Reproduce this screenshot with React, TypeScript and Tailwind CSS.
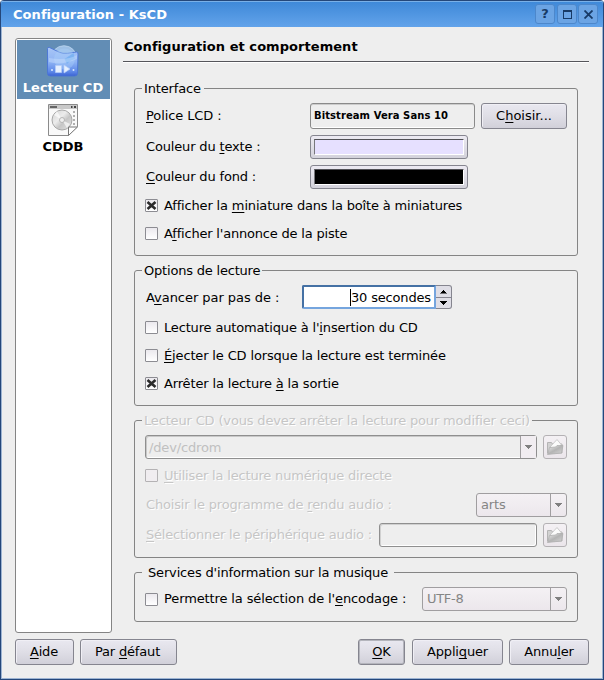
import React from "react";

type Kids = { children?: React.ReactNode };

function U({ children }: Kids) {
  return <span className="underline decoration-1 underline-offset-2 [text-decoration-skip-ink:none]">{children}</span>;
}

function Label({ children, className = "" }: Kids & { className?: string }) {
  return <span className={"whitespace-nowrap leading-4 " + className}>{children}</span>;
}

function Panel({ title, className, legend, children }: Kids & { title: string; className: string; legend: string }) {
  return (
    <section className={"relative flex flex-col rounded-[3px] border border-[#848484] px-[10px] " + className}>
      <h2 className={"absolute -top-[8px] bg-[#eeeeee] whitespace-nowrap leading-4 " + legend}>{title}</h2>
      {children}
    </section>
  );
}

function Check({ on, off, children, className = "" }: Kids & { on?: boolean; off?: boolean; className?: string }) {
  return (
    <div className={"flex h-[13px] items-center gap-[6px] " + className}>
      <span
        className={
          "flex size-[13px] shrink-0 items-center justify-center rounded-[1px] border " +
          (off ? "border-[#b4b2b4] bg-[#f0edf0]" : "border-[#8c8c92] bg-linear-to-b from-[#ebe9ee] to-white")
        }
      >
        {on && (
          <svg width="11" height="11" viewBox="0 0 11 11" stroke="#2b2b2b" strokeWidth="2.6">
            <path d="M1.5 2 9.5 9M9.5 2 1.5 9" />
          </svg>
        )}
      </span>
      <Label className={off ? "text-[#c6c6c6] [text-shadow:1px_1px_0_#fff]" : ""}>{children}</Label>
    </div>
  );
}

function Button({ children, className }: Kids & { className: string }) {
  return (
    <button
      className={
        "flex h-[26px] shrink-0 items-center justify-center rounded-[3px] border bg-linear-to-b from-[#e9e8f0] via-[#dfdee6] to-[#d1d0d9] leading-4 whitespace-nowrap " +
        className
      }
    >
      <span>{children}</span>
    </button>
  );
}

const plain = "border-[#85858f] shadow-[inset_1px_1px_0_#f0eff5] ";

function Swatch({ className }: { className: string }) {
  return (
    <button className="h-6 w-[158px] shrink-0 rounded-[3px] border border-[#85858f] bg-linear-to-b from-[#eceaf2] to-[#d3d2db] p-[3px]">
      <span className={"block h-4 border border-t-[#505055] border-l-[#77777c] border-r-white border-b-white " + className} />
    </button>
  );
}

function Down({ color }: { color: string }) {
  return (
    <svg width="7" height="4" viewBox="0 0 7 4" fill={color} shapeRendering="crispEdges">
      <path d="M0 0h7v1H6v1H5v1H4v1H3V3H2V2H1V1H0z" />
    </svg>
  );
}

function Combo({ text, className }: { text: string; className: string }) {
  return (
    <div className={"flex h-6 shrink-0 rounded-[3px] border border-[#a09ea0] bg-linear-to-b from-[#f4f1f4] to-[#ece7ec] text-[#858585] " + className}>
      <span className="flex flex-1 items-center pl-1 leading-4">{text}</span>
      <span className="flex w-4 items-center justify-center border-l border-[#a09ea0]">
        <Down color="#808080" />
      </span>
    </div>
  );
}

function FolderButton() {
  return (
    <button className="flex size-6 shrink-0 items-center justify-center rounded-[3px] border border-[#b4b1b4] bg-linear-to-b from-[#f4f1f4] to-[#ebe6eb]">
      <svg width="18" height="18" viewBox="0 0 18 18">
        <defs>
          <linearGradient id="folderFront" x1="0" y1="0" x2="1" y2="1">
            <stop offset="0" stopColor="#f0f0f0" />
            <stop offset=".5" stopColor="#b4b4b4" />
            <stop offset="1" stopColor="#d8d8d8" />
          </linearGradient>
        </defs>
        <path d="M1.5 4.500h4l1 1.500h9.500v9H1.500z" fill="#d2d2d2" stroke="#b4b4b4" />
        <path d="M4 9 11 1.500 15.500 7 9 12z" fill="#fbfbfb" stroke="#c0c0c0" strokeWidth=".8" />
        <path d="M1.500 16.500 3.500 9.500l6-.5 1.500-1.500h6L15.500 15z" fill="url(#folderFront)" stroke="#acacac" strokeWidth=".7" />
      </svg>
    </button>
  );
}

function PlayerIcon() {
  return (
    <svg width="34" height="33" viewBox="0 0 34 33">
      <defs>
        <linearGradient id="blueFolder" x1="0" y1="0" x2="0" y2="1">
          <stop offset="0" stopColor="#a9c6f6" />
          <stop offset=".5" stopColor="#8fb4f4" />
          <stop offset=".85" stopColor="#5d88e8" />
          <stop offset="1" stopColor="#3b62d2" />
        </linearGradient>
      </defs>
      <circle cx="18" cy="13.500" r="12.800" fill="#9dc0e6" stroke="#bcd6ef" strokeWidth=".8" />
      <path d="M1.500 3.500Q1.800 2 3.500 2.500l10 4.800q3 1.500 8 1l9-1.300q1.500 0 1.500 2l-.5 19.500q-.2 2.500-3 2.500H4.500q-3 0-3-2.500z" fill="url(#blueFolder)" stroke="#4a74d6" strokeWidth=".9" />
      <circle cx="18.500" cy="14" r="10.500" fill="#a9d0fa" opacity=".4" />
      <path d="m18.500 14 9-6 1.500 6q-5 1-8 5z" fill="#5ea5ef" opacity=".55" />
      <path d="M3 17q12 4 28-3v-4q-10 6-28 3z" fill="#d8e8ff" opacity=".35" />
      <path d="M9.500 20.500h6v7h-6zM18 20l6 4-6 4z" fill="#e4efff" stroke="#b4cdf8" strokeWidth=".7" />
      <circle cx="6" cy="25" r="1" fill="#dceaff" />
      <circle cx="27.500" cy="25" r="1" fill="#dceaff" />
    </svg>
  );
}

function CddbIcon() {
  return (
    <svg width="32" height="32" viewBox="0 0 32 32">
      <defs>
        <linearGradient id="disc" x1="0" y1="0" x2="1" y2="1">
          <stop offset="0" stopColor="#d2d2d2" />
          <stop offset=".4" stopColor="#ececec" />
          <stop offset=".6" stopColor="#c6c6c6" />
          <stop offset="1" stopColor="#e6e6e6" />
        </linearGradient>
      </defs>
      <path d="M1.500.5h29v22l-9 9h-20z" fill="#f9f9f9" stroke="#8b8b8b" />
      <path d="M2 1h28v4H2z" fill="#c9c9c9" />
      <path d="M3 3h7" stroke="#666" strokeWidth="2" />
      <path d="M24 3h1.500m1.500 0h2" stroke="#444" strokeWidth="2" />
      <path d="M26 8h2m-2 4h2m-2 4h2m-2 4h2" stroke="#b0b0b0" strokeWidth="2" />
      <circle cx="15" cy="16" r="10" fill="url(#disc)" stroke="#a0a0a0" strokeWidth=".9" />
      <path d="m15 16-8-5 3-4zM15 16l8 4-3 4z" fill="#fff" opacity=".65" />
      <circle cx="15" cy="16" r="2.500" fill="#eee" stroke="#aaa" strokeWidth=".8" />
      <path d="M21.500 31.500v-8.500h9z" fill="#fff" stroke="#777" />
    </svg>
  );
}

const dim = "pl-px text-[#c6c6c6] [text-shadow:1px_1px_0_#fff] ";
const titleButton = "flex size-5 items-center justify-center rounded-[3px] border border-[#4c87cb] bg-[#6ba4e4]";

export default function App() {
  return (
    <div className="flex h-[680px] w-[604px] flex-col overflow-hidden rounded-t-[4px] border-x border-b border-[#24477a] bg-[#eeeeee] font-['DejaVu_Sans',sans-serif] text-[13px] tracking-[-0.16px] text-black">
      <header className="flex h-[27px] shrink-0 items-center border-t border-[#24477a] bg-linear-to-b from-[#3d88d8] to-[#62a3ea] pr-[5px] pl-[12px] shadow-[inset_0_1px_0_#79b0e8]">
        <h1 className="flex-1 pt-[2px] font-bold leading-4 tracking-[0.05px] text-white">Configuration - KsCD</h1>
        <div className="flex text-[#173a66]">
          <span className={titleButton + " mr-[2px] font-bold leading-4"}>?</span>
          <span className={titleButton + " mr-px"}>
            <span className="h-[9px] w-[9px] border border-t-2 border-[#173a66]" />
          </span>
          <span className={titleButton}>
            <svg width="9" height="9" viewBox="0 0 9 9" stroke="#173a66" strokeWidth="1.8">
              <path d="M.5.5l8 8M8.500.5l-8 8" />
            </svg>
          </span>
        </div>
      </header>
      <div className="flex flex-1 flex-col border-x border-b border-[#9db4d2] pt-[11px] pl-[13px]">
        <div className="flex h-[595px] shrink-0">
          <nav className="flex w-[97px] shrink-0 flex-col rounded-[3px] border border-[#848484] bg-white p-px text-center font-bold tracking-normal">
            <div className="flex h-[59px] flex-col items-center bg-[#628db5] pt-[5px] pr-px text-white">
              <PlayerIcon />
              <span className="mt-[2px] whitespace-nowrap leading-4">Lecteur CD</span>
            </div>
            <div className="flex flex-col items-center pt-[5px] pr-px">
              <CddbIcon />
              <span className="mt-[3px] leading-4">CDDB</span>
            </div>
          </nav>
          <main className="ml-[11px] flex w-[466px] flex-col">
            <div className="flex h-[25px] shrink-0 items-start border-b border-white pl-px shadow-[inset_0_-1px_0_#55555a]">
              <span className="pt-px font-bold leading-4 tracking-[0.05px]">Configuration et comportement</span>
            </div>
            <div className="ml-[11px] flex w-[444px] flex-col pt-[25px]">
              <Panel title="Interface" legend="left-[7px] pl-[2px] pr-[3px]" className="h-[168px] pt-[14px]">
                <div className="flex h-[26px] items-center">
                  <Label className="w-[165px] pl-px tracking-[-0.1px]"><U>P</U>olice LCD :</Label>
                  <div className="flex h-[26px] w-[165px] items-center rounded-[3px] border border-[#8a8a8a] pb-px pl-[3px] text-[10px] font-bold tracking-[0.07px] whitespace-nowrap shadow-[inset_0_-1px_0_#fff,inset_0_1px_0_#ccc]">Bitstream Vera Sans 10</div>
                  <Button className={plain + "ml-[6px] w-[86px] tracking-normal"}>C<U>h</U>oisir...</Button>
                </div>
                <div className="mt-[6px] flex h-6 items-center">
                  <Label className="w-[165px] pl-px">Couleur du <U>t</U>exte :</Label>
                  <Swatch className="bg-[#e6e0ff]" />
                </div>
                <div className="mt-[6px] flex h-6 items-center">
                  <Label className="w-[165px] pl-px"><U>C</U>ouleur du fond :</Label>
                  <Swatch className="bg-black" />
                </div>
                <Check on className="mt-[10px]">Afficher la <U>m</U>iniature dans la boîte à miniatures</Check>
                <Check className="mt-[15px] tracking-[-0.19px]">A<U>f</U>ficher l'annonce de la piste</Check>
              </Panel>
              <Panel title="Options de lecture" legend="left-[7px] pl-[2px] pr-[2px] tracking-[-0.2px]" className="mt-[14px] h-[136px] pt-[14px]">
                <div className="flex h-6 items-center">
                  <Label className="w-[157px] pt-[2px] pl-px tracking-[-0.05px]">A<U>v</U>ancer par pas de :</Label>
                  <div className="flex h-6 w-[134px] items-center justify-end rounded-l-[2px] border-2 border-[#75a5de] border-t-[#4571a4] border-l-[#4571a4] bg-white pr-[3px] leading-4">
                    <span className="border-l border-black pt-px tracking-[-0.16px]">30 secondes</span>
                  </div>
                  <div className="flex h-6 w-4 flex-col rounded-r-[3px] border border-l-0 border-[#85858f] bg-[#dfdee6]">
                    <span className="flex flex-1 rotate-180 items-center justify-center"><Down color="#000" /></span>
                    <span className="h-px bg-[#85858f]" />
                    <span className="flex flex-1 items-center justify-center"><Down color="#000" /></span>
                  </div>
                </div>
                <Check className="mt-[12px]">Lecture automatique à l'<U>i</U>nsertion du CD</Check>
                <Check className="mt-[15px] tracking-[-0.15px]"><U>É</U>jecter le CD lorsque la lecture est terminée</Check>
                <Check on className="mt-[15px] tracking-[-0.15px]">Arrêter la lecture <U>à</U> la sortie</Check>
              </Panel>
              <Panel title="Lecteur CD (vous devez arrêter la lecture pour modifier ceci)" legend="left-[7px] px-[2px] tracking-[-0.16px] text-[#c6c6c6] [text-shadow:1px_1px_0_#fff]" className="mt-[14px] h-[138px] pt-[14px]">
                <div className="flex h-6 items-center">
                  <div className="flex h-6 w-[392px] items-center rounded-[3px] border border-[#8f8f8f] text-[#c0c0c0] shadow-[inset_1px_1px_0_#c8c8c8,inset_0_-1px_0_#fff]">
                    <span className="flex-1 pt-px pl-[3px] leading-4">/dev/cdrom</span>
                    <span className="flex h-full w-4 items-center justify-center border-l border-[#a09ea0] bg-[#f1edf1]"><Down color="#808080" /></span>
                  </div>
                  <span className="w-[6px]" />
                  <FolderButton />
                </div>
                <Check off className="mt-[10px] tracking-[-0.18px]"><U>U</U>tiliser la lecture numérique directe</Check>
                <div className="mt-[11px] flex h-6 items-center justify-between">
                  <Label className={dim}>Choisir le programme de <U>r</U>endu audio :</Label>
                  <Combo text="arts" className="w-[91px]" />
                </div>
                <div className="mt-[6px] flex h-6 items-center">
                  <Label className={dim + "w-[234px] tracking-[-0.2px]"}><U>S</U>électionner le périphérique audio :</Label>
                  <span className="mr-[6px] h-6 w-[158px] shrink-0 rounded-[3px] border border-[#8f8f8f] shadow-[inset_1px_1px_0_#d0d0d0,inset_-1px_-1px_0_#fff]" />
                  <FolderButton />
                </div>
              </Panel>
              <Panel title="Services d'information sur la musique" legend="left-[7px] px-[6px]" className="mt-[14px] h-[50px] pt-[14px]">
                <div className="flex h-6 items-center justify-between">
                  <Check className="tracking-[-0.12px]">Permettre la sélection de l'<U>e</U>ncodage :</Check>
                  <Combo text="UTF-8" className="w-[145px] tracking-[-0.3px]" />
                </div>
              </Panel>
            </div>
          </main>
        </div>
        <footer className="mt-[6px] flex h-[26px] w-[574px]">
          <Button className={plain + "w-[59px] pr-px"}><U>A</U>ide</Button>
          <Button className={plain + "ml-[6px] w-[97px] pr-[2px]"}>Par <U>d</U>éfaut</Button>
          <span className="flex-1" />
          <Button className="w-[47px] border-[#85858f] shadow-[inset_0_0_0_1px_#b4b5bc]"><U>O</U>K</Button>
          <Button className={plain + "ml-[7px] w-[91px]"}>Appli<U>q</U>uer</Button>
          <Button className={plain + "ml-[6px] w-[80px]"}>Annu<U>l</U>er</Button>
        </footer>
      </div>
    </div>
  );
}
